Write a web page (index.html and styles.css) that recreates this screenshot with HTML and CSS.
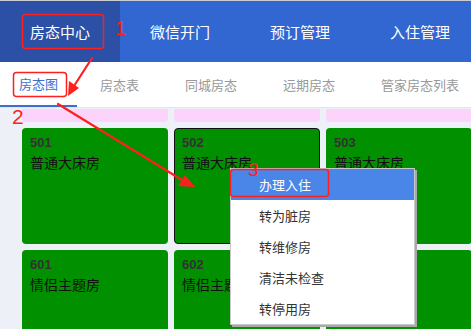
FILE: index.html
```html
<!DOCTYPE html>
<html lang="zh">
<head>
  <meta charset="UTF-8" />
  <title>房态中心</title>
  <link rel="stylesheet" href="styles.css">
</head>
<body>
  <div class="page">
    <div class="nav">
      <div class="nav-item active">房态中心</div>
      <div class="nav-item">微信开门</div>
      <div class="nav-item">预订管理</div>
      <div class="nav-item">入住管理</div>
    </div>
    <div class="tabs">
      <div class="tab active">房态图</div>
      <div class="tab">房态表</div>
      <div class="tab">同城房态</div>
      <div class="tab">远期房态</div>
      <div class="tab">管家房态列表</div>
    </div>
    <div class="rooms">
      <div class="strip"></div>
      <div class="strip"></div>
      <div class="strip"></div>

      <div class="room"><div class="no">501</div><div class="type">普通大床房</div></div>
      <div class="room selected"><div class="no">502</div><div class="type">普通大床房</div></div>
      <div class="room"><div class="no">503</div><div class="type">普通大床房</div></div>

      <div class="room"><div class="no">601</div><div class="type">情侣主题房</div></div>
      <div class="room"><div class="no">602</div><div class="type">情侣主题房</div></div>
      <div class="room"><div class="no">603</div><div class="type">情侣主题房</div></div>
    </div>

    <!-- right click menu on 502 -->
    <div class="menu">
      <div class="menu-item hover">办理入住</div>
      <div class="menu-item">转为脏房</div>
      <div class="menu-item">转维修房</div>
      <div class="menu-item">清洁未检查</div>
      <div class="menu-item">转停用房</div>
    </div>

    <!-- red annotations -->
    <svg class="marks" width="471" height="329" viewBox="0 0 471 329">
      <g fill="none" stroke="#ff1f1f" stroke-width="1.5">
        <rect x="22.5" y="14.5" width="81" height="34" rx="3" />
        <rect x="13.5" y="72.5" width="53" height="24" rx="3" />
        <rect x="230.5" y="169.5" width="98" height="27" rx="3" />
      </g>
      <g stroke="#ff1f1f" stroke-width="2.2" stroke-linecap="round">
        <line x1="92" y1="58" x2="74" y2="86" />
        <line x1="58" y1="104" x2="182" y2="180" />
      </g>
      <g fill="#ff1f1f">
        <polygon points="68,96 69,81 79,88" />
        <polygon points="195,187 178,186 185,175" />
      </g>
      <g fill="#ff1f1f" font-family="'Liberation Sans', Arial, sans-serif">
        <text x="115" y="35" font-size="20">1</text>
        <text x="12" y="124" font-size="21">2</text>
        <text x="248" y="176" font-size="19">3</text>
      </g>
    </svg>
  </div>
</body>
</html>
```

FILE: styles.css
```css
body {
  margin: 0;
  font-family: "Liberation Sans", Arial, "Noto Sans CJK SC", sans-serif;
  background: #eef0f8;
}

.page {
  position: relative;
  width: 471px;
  height: 329px;
  overflow: hidden;
}

.nav {
  display: flex;
  height: 61px;
  background: #3267d2;
  border-top: 1px solid #c9ccd4;
}
.nav-item {
  width: 120px;
  flex-shrink: 0;
  display: flex;
  align-items: center;
  justify-content: center;
  color: #fff;
  font-size: 15px;
  font-family: "Noto Sans CJK SC", sans-serif;
}
.nav-item.active {
  background: #2b50a5;
}

.tabs {
  display: flex;
  height: 46px;
  background: #fff;
  border-bottom: 1px solid #e3e5ee;
  box-sizing: border-box;
}
.tab {
  padding: 0 23px;
  display: flex;
  align-items: center;
  font-size: 13px;
  color: #999;
  font-family: "Noto Sans CJK SC", sans-serif;
  white-space: nowrap;
  box-sizing: border-box;
}
.tab:first-child {
  padding: 0 19px;
}
.tab.active {
  color: #3d6fd0;
  border-bottom: 2px solid #3d6fd0;
}

.rooms {
  display: grid;
  grid-template-columns: 146px 146px 146px;
  grid-template-rows: 13px 116px 116px;
  gap: 6px;
  padding: 1px 0 0 22px;
}
.strip {
  background: #fbd3fb;
  border-radius: 0 0 4px 4px;
}
.room {
  background: #009000;
  border-radius: 4px;
  padding: 6px 8px;
  box-sizing: border-box;
}
.room.selected {
  border: 1px solid #111;
  padding: 5px 7px;
}
.no {
  font-size: 13px;
  font-weight: bold;
  color: #333;
  line-height: 17px;
}
.type {
  margin-top: 2px;
  font-size: 14px;
  color: #111;
  font-family: "Noto Sans CJK SC", sans-serif;
  line-height: 18px;
}

.menu {
  position: absolute;
  left: 230px;
  top: 168px;
  width: 185px;
  background: #fff;
  border: 1px solid #c8c8c8;
  box-shadow: 2px 2px 0 #a9a9a9;
  box-sizing: border-box;
}
.menu-item {
  height: 31px;
  padding-left: 28px;
  display: flex;
  align-items: center;
  font-size: 13px;
  color: #333;
  font-family: "Noto Sans CJK SC", sans-serif;
}
.menu-item.hover {
  background: #4a86e8;
  color: #fff;
}

.marks {
  position: absolute;
  left: 0;
  top: 0;
}
```
